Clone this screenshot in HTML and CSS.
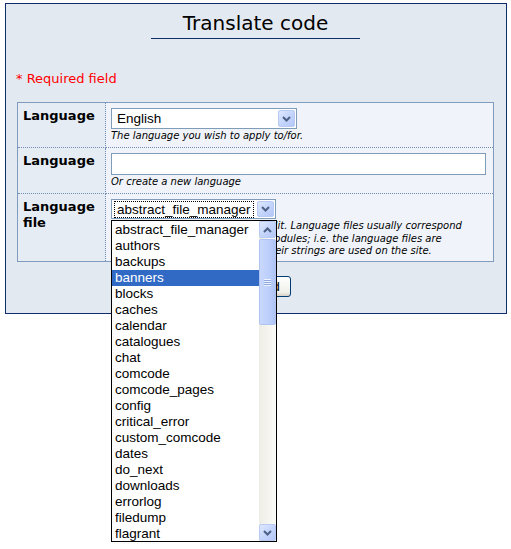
FILE: index.html
```html
<!DOCTYPE html>
<html>
<head>
<meta charset="utf-8">
<title>Translate code</title>
<link rel="stylesheet" href="styles.css">
</head>
<body>
<div class="box">
  <h1 class="title">Translate code</h1>
  <p class="required">* Required field</p>
  <table class="form">
    <colgroup><col class="c1"><col class="c2"></colgroup>
    <tr>
      <th>Language</th>
      <td>
        <div class="sel sel-lang">
          <span class="val">English</span>
          <span class="arrow"><svg width="9" height="6" viewBox="0 0 9 6"><path d="M1 1 L4.5 4.5 L8 1" stroke="#4d6185" stroke-width="2" fill="none"/></svg></span>
        </div>
        <div class="help">The language you wish to apply to/for.</div>
      </td>
    </tr>
    <tr>
      <th>Language</th>
      <td>
        <div class="text-input"></div>
        <div class="help">Or create a new language</div>
      </td>
    </tr>
    <tr class="row3">
      <th>Language file</th>
      <td>
        <div class="dd">
          <div class="sel sel-file">
            <span class="val"><span class="focus">abstract_file_manager</span></span>
            <span class="arrow"><svg width="9" height="6" viewBox="0 0 9 6"><path d="M1 1 L4.5 4.5 L8 1" stroke="#4d6185" stroke-width="2" fill="none"/></svg></span>
          </div>
          <div class="list">
            <ul class="items">
              <li>abstract_file_manager</li>
              <li>authors</li>
              <li>backups</li>
              <li class="hl">banners</li>
              <li>blocks</li>
              <li>caches</li>
              <li>calendar</li>
              <li>catalogues</li>
              <li>chat</li>
              <li>comcode</li>
              <li>comcode_pages</li>
              <li>config</li>
              <li>critical_error</li>
              <li>custom_comcode</li>
              <li>dates</li>
              <li>do_next</li>
              <li>downloads</li>
              <li>errorlog</li>
              <li>filedump</li>
              <li>flagrant</li>
            </ul>
            <div class="scroll">
              <span class="sbtn"><svg width="9" height="6" viewBox="0 0 9 6"><path d="M1 5 L4.5 1.5 L8 5" stroke="#4d6185" stroke-width="2" fill="none"/></svg></span>
              <span class="thumb"><span class="grip"></span></span>
              <span class="track"></span>
              <span class="sbtn"><svg width="9" height="6" viewBox="0 0 9 6"><path d="M1 1 L4.5 4.5 L8 1" stroke="#4d6185" stroke-width="2" fill="none"/></svg></span>
            </div>
          </div>
        </div>
        <div class="help help3">Choose which language file to edit. Language files usually correspond<br>to the various software addon modules; i.e. the language files are<br>named after the places where their strings are used on the site.</div>
      </td>
    </tr>
  </table>
  <div class="actions"><button class="submit" type="button">Proceed</button></div>
</div>
</body>
</html>
```
FILE: styles.css
```css
html, body {
  margin: 0;
  padding: 0;
  background: #ffffff;
}
body {
  padding: 3px 4px 0 5px;
  min-height: 549px;
  box-sizing: border-box;
  font-family: "DejaVu Sans", Verdana, sans-serif;
}
.box {
  border: 1px solid #0f2c6b;
  background: #e3e9f1;
  padding: 0 12px 16px 11px;
  box-sizing: border-box;
  width: 502px;
}
.title {
  width: 209px;
  margin: 7px auto 0;
  padding: 0 0 3px;
  border-bottom: 1px solid #0f2c6b;
  font-size: 20px;
  line-height: 24px;
  font-weight: normal;
  text-align: center;
  color: #000;
}
.required {
  margin: 32px 0 15px -1px;
  font-size: 13px;
  line-height: 16px;
  color: #ff0000;
}
.form {
  width: 100%;
  border-collapse: collapse;
  border: 1px solid #7f9bbd;
}
.c1 { width: 88px; }
.form th, .form td {
  padding: 5px 6px 5px 5px;
  vertical-align: top;
  border: 1px dotted #6f8db5;
}
.form .row3 td, .form .row3 th { padding-bottom: 3px; }
.form th {
  background: #e6ecf4;
  text-align: left;
  font-size: 13px;
  line-height: 16px;
  font-weight: bold;
  color: #000;
  padding-left: 5px;
}
.form td {
  background: #f0f4fa;
}
.sel {
  display: flex;
  align-items: center;
  box-sizing: border-box;
  border: 1px solid #7f9db9;
  background: #fff;
  font-family: "Liberation Sans", Arial, sans-serif;
  font-size: 13.5px;
  color: #000;
}
.sel-lang {
  width: 186px;
  height: 21px;
  padding: 1px;
}
.sel-file {
  width: 165px;
  height: 20px;
  padding: 1px;
}
.sel .val {
  flex: 1;
  padding-left: 4px;
  line-height: 17px;
  white-space: nowrap;
  overflow: hidden;
}
.sel-file .val { padding-left: 1px; }
.focus {
  display: inline-block;
  border: 1px dotted #000;
  padding: 0 2px 0 2px;
  line-height: 15px;
}
.arrow, .sbtn {
  display: flex;
  align-items: center;
  justify-content: center;
  width: 17px;
  height: 17px;
  box-sizing: border-box;
  border: 1px solid #b9cbf3;
  border-radius: 2px;
  background: linear-gradient(135deg, #dde7fe 0%, #c3d4fc 55%, #b3c8f7 100%);
}
.sel-file .arrow { height: 16px; }
.help {
  margin-top: 1px;
  font-size: 10px;
  line-height: 12px;
  font-style: italic;
  color: #000;
  white-space: nowrap;
}
.help3 { margin-top: 1px; line-height: 12.5px; }
.text-input {
  width: 375px;
  height: 22px;
  box-sizing: border-box;
  border: 1px solid #7f9db9;
  background: #fff;
}
.dd {
  position: relative;
}
.list {
  position: absolute;
  left: 0;
  top: calc(100% + 1px);
  width: 166px;
  height: 322px;
  box-sizing: border-box;
  border: 1px solid #000;
  background: #fff;
  display: flex;
  overflow: hidden;
  z-index: 10;
}
.items {
  list-style: none;
  margin: 0;
  padding: 1px 0 0;
  flex: 1;
  font-family: "Liberation Sans", Arial, sans-serif;
  font-size: 13.5px;
  color: #000;
}
.items li {
  height: 16px;
  line-height: 16px;
  padding-left: 3px;
  white-space: nowrap;
}
.items li.hl {
  background: #316ac5;
  color: #fff;
}
.scroll {
  width: 17px;
  display: flex;
  flex-direction: column;
  background: linear-gradient(to right, #eeede5, #fbfbf8);
}
.thumb {
  height: 86px;
  margin-top: 1px;
  box-sizing: border-box;
  border: 1px solid #b0c4f3;
  border-radius: 2px;
  background: linear-gradient(to right, #c9d8fc, #bccffb 60%, #aec4f5);
  display: flex;
  align-items: center;
  justify-content: center;
}
.grip {
  width: 7px;
  height: 7px;
  background: repeating-linear-gradient(to bottom, #eef3fe 0 1px, #8fa8e0 1px 2px);
}
.track { flex: 1; }
.actions {
  display: flex;
  justify-content: center;
  margin-top: 14px;
}
.submit {
  width: 70px;
  height: 21px;
  box-sizing: border-box;
  border: 1px solid #003c74;
  border-radius: 3px;
  background: linear-gradient(to bottom, #ffffff, #f0f0ea 80%, #d6d0c5);
  font-family: "Liberation Sans", Arial, sans-serif;
  font-size: 13px;
  color: #000;
  padding: 0;
}
```
